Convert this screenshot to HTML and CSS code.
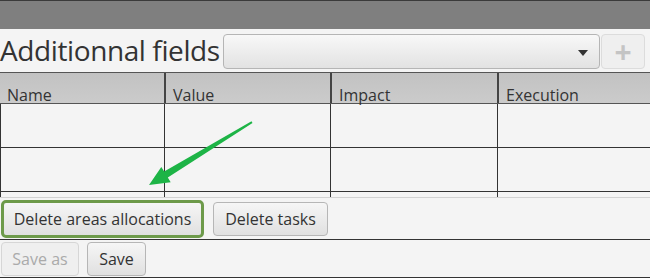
FILE: index.html
```html
<!doctype html>
<html>
<head>
<title>Additionnal fields</title>
<link rel="stylesheet" href="styles.css">
</head>
<body>
<div class="top-bar"></div>
<div class="title-row">
    <h1 class="title">Additionnal fields</h1>
    <div class="combo"><span class="combo-arrow"></span></div>
    <button class="add-btn" disabled>+</button>
</div>
<div class="fields-table">
    <div class="table-head">
        <div class="head-cell">Name</div>
        <div class="head-cell">Value</div>
        <div class="head-cell">Impact</div>
        <div class="head-cell">Execution</div>
    </div>
    <div class="table-row">
        <div class="cell"></div><div class="cell"></div><div class="cell"></div><div class="cell"></div>
    </div>
    <div class="table-row">
        <div class="cell"></div><div class="cell"></div><div class="cell"></div><div class="cell"></div>
    </div>
    <div class="table-row">
        <div class="cell"></div><div class="cell"></div><div class="cell"></div><div class="cell"></div>
    </div>
</div>
<div class="tool-bar">
    <button class="fx-btn fx-btn-mark">Delete areas allocations</button>
    <button class="fx-btn btn-tasks">Delete tasks</button>
</div>
<div class="save-bar">
    <button class="fx-btn btn-save-as" disabled>Save as</button>
    <button class="fx-btn btn-save">Save</button>
</div>
<svg class="hint-arrow" width="650" height="278" viewBox="0 0 650 278">
    <path d="M149 185 L161.3 166.9 L164.2 171.6 L251.5 121.2 L252.5 122.9 L167.8 177.6 L170.7 182.3 Z" fill="#1db446"/>
</svg>
</body>
</html>
```
FILE: styles.css
```css
html,body{margin:0;padding:0;}
body{
    background:#f4f4f4;
    font-family:"Open Sans","Noto Sans",sans-serif;
    color:#333;
    width:650px;
    height:278px;
    overflow:hidden;
    position:relative;
}
.top-bar{height:28px;background:#7f7f7f;border-top:1px solid #3a3a3a;}
.title-row{height:43px;display:flex;align-items:center;border-bottom:1px solid #555;}
.title{width:223px;flex:none;margin:0;font-weight:400;font-size:28px;line-height:43px;color:#333;letter-spacing:-0.4px;white-space:nowrap;overflow:hidden;}
.combo{
    width:377px;height:35px;box-sizing:border-box;flex:none;
    border:1px solid #b5b5b5;border-radius:4px;
    background:linear-gradient(#f8f8f8,#e2e2e2);
    position:relative;margin-top:2px;
}
.combo-arrow{position:absolute;right:11px;top:15px;border-top:6px solid #333;border-left:5px solid transparent;border-right:5px solid transparent;}
.add-btn{
    width:44px;height:35px;margin:2px 0 0 1px;box-sizing:border-box;flex:none;
    border:1px solid #dcdcdc;border-radius:4px;background:#efefef;
    color:#c4c4c4;font-size:30px;font-weight:700;line-height:28px;padding:0;font-family:"Open Sans",sans-serif;
}
.fields-table{height:124px;overflow:hidden;border-bottom:1px solid #d2d2d2;}
.table-head,.table-row{display:grid;grid-template-columns:164px 166px 167px 1fr;}
.table-head{height:30px;background:linear-gradient(#c2c2c2,#cbcbcb);border-bottom:1px solid #555;}
.head-cell{
    border-left:2px solid #444;font-size:16px;color:#333;
    padding:0 0 0 7px;height:30px;line-height:16px;
    display:flex;align-items:flex-end;
}
.head-cell:first-child{border-left:0;padding-left:7px;}
.table-row{height:43px;border-bottom:1px solid #333;}
.cell{border-left:1px solid #333;}
.tool-bar{height:41px;display:flex;align-items:center;gap:9px;padding:0 0 0 1px;border-bottom:1px solid #333;}
.save-bar{height:37px;display:flex;align-items:center;gap:8px;padding:0 0 0 1px;border-bottom:1px solid #333;}
.fx-btn{
    height:34px;box-sizing:border-box;padding:0 10px;
    border:1px solid #b6b6b6;border-radius:4px;
    background:linear-gradient(#f6f6f6,#e0e0e0);
    font-family:"Open Sans","Noto Sans",sans-serif;font-size:16px;color:#333;
}
.fx-btn:disabled{color:#aaa;border-color:#d6d6d6;background:#efefef;}
.fx-btn-mark{border:3px solid #6d9a4a;border-radius:5px;height:38px;padding:0;width:203px;}
.btn-tasks{width:115px;padding:0;}
.btn-save-as{width:78px;padding:0;}
.btn-save{width:59px;padding:0;}
.hint-arrow{position:absolute;left:0;top:0;pointer-events:none;}
```
